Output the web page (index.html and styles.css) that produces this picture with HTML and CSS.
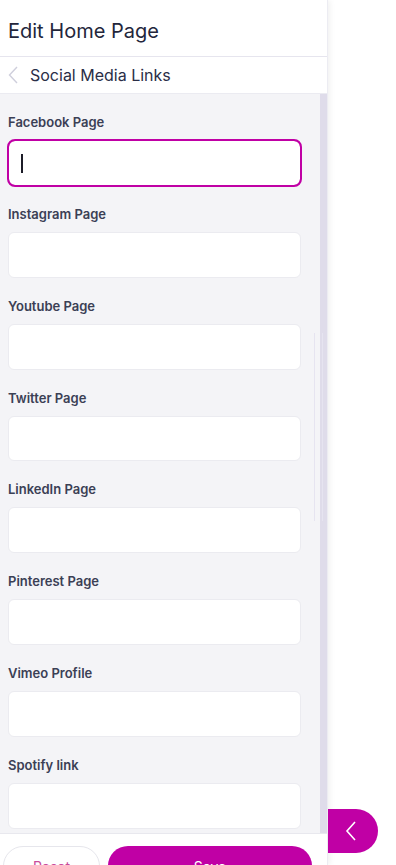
FILE: index.html
```html
<!DOCTYPE html>
<html lang="en">
<head>
    <meta charset="UTF-8">
    <meta name="viewport" content="width=device-width, initial-scale=1.0">
    <title>Edit Home Page</title>
    <link rel="stylesheet" href="styles.css">
</head>
<body>

    <!-- Editor side panel -->
    <div class="panel">
        <div class="header">
            <h1>Edit Home Page</h1>
        </div>
        <div class="subheader">
            <svg class="back" width="12" height="20" viewBox="0 0 12 20"><path d="M10 2 L2.5 10 L10 18" fill="none" stroke="#cfcfdc" stroke-width="1.4"/></svg>
            <span>Social Media Links</span>
        </div>

        <div class="content">
            <div class="form">
                <div class="field">
                    <label>Facebook Page</label>
                    <div class="input focused"><span class="caret"></span></div>
                </div>
                <div class="field">
                    <label>Instagram Page</label>
                    <div class="input"></div>
                </div>
                <div class="field">
                    <label>Youtube Page</label>
                    <div class="input"></div>
                </div>
                <div class="field">
                    <label>Twitter Page</label>
                    <div class="input"></div>
                </div>
                <div class="field">
                    <label>LinkedIn Page</label>
                    <div class="input"></div>
                </div>
                <div class="field">
                    <label>Pinterest Page</label>
                    <div class="input"></div>
                </div>
                <div class="field">
                    <label>Vimeo Profile</label>
                    <div class="input"></div>
                </div>
                <div class="field">
                    <label>Spotify link</label>
                    <div class="input"></div>
                </div>
            </div>
            <div class="track"></div>
            <div class="thumb"></div>
        </div>

        <div class="footer">
            <button class="btn reset">Reset</button>
            <button class="btn save">Save</button>
        </div>
    </div>

    <!-- Collapse toggle -->
    <button class="toggle">
        <svg width="14" height="22" viewBox="0 0 14 22"><path d="M11 2 L3 11 L11 20" fill="none" stroke="white" stroke-width="1.6"/></svg>
    </button>

</body>
</html>
```

FILE: styles.css
```css
* { margin: 0; padding: 0; box-sizing: border-box; }
body {
    background: white;
    font-family: Inter, "Noto Sans", sans-serif;
    height: 865px;
    overflow: hidden;
    position: relative;
}
.panel {
    width: 328px;
    height: 865px;
    display: flex;
    flex-direction: column;
    background: white;
    border-right: 1px solid #ececf2;
    box-shadow: 2px 0 6px rgba(0, 0, 0, 0.06);
}
.header {
    height: 57px;
    border-bottom: 1px solid #e6e5ee;
    padding: 18px 8px 0;
}
.header h1 {
    font-size: 20px;
    font-weight: 400;
    color: #23263b;
    line-height: 26px;
}
.subheader {
    height: 37px;
    border-bottom: 1px solid #ebebf1;
    display: flex;
    align-items: center;
    padding-left: 7px;
    gap: 11px;
}
.subheader span {
    font-size: 16px;
    color: #2a2e47;
    padding-bottom: 1px;
}
.content {
    flex: 1;
    display: flex;
    background: #f4f4f7;
    overflow: hidden;
    position: relative;
}
.form {
    flex: 1;
    padding: 20px 0 0 8px;
    padding-right: 19px;
}
.field {
    margin-bottom: 20px;
}
.field label {
    display: block;
    font-size: 13px;
    font-weight: 600;
    color: #3b4055;
    line-height: 16px;
    margin-bottom: 10px;
}
.input {
    height: 45.85px;
    background: white;
    border: 1px solid #ebebf0;
    border-radius: 6px;
    position: relative;
}
.input.focused {
    outline: 2px solid #c000a5;
    outline-offset: -1px;
    border-color: #c000a5;
    border-radius: 7px;
}
.caret {
    position: absolute;
    left: 12px;
    top: 13px;
    width: 1.5px;
    height: 19px;
    background: #1c1c28;
}
.track {
    width: 7px;
    background: #dfdcea;
}
.thumb {
    position: absolute;
    left: 314px;
    top: 239px;
    width: 9px;
    height: 188px;
    border-left: 1px solid #e6e4f0;
    border-right: 1px solid #e6e4f0;
}
.footer {
    height: 32px;
    border-top: 1px solid #e8e8ee;
    background: white;
    display: flex;
    gap: 8px;
    padding: 12px 0 0 3px;
}
.btn {
    height: 40px;
    border-radius: 20px;
    font-family: Inter, "Noto Sans", sans-serif;
    font-size: 14px;
    cursor: pointer;
}
.reset {
    width: 97px;
    background: white;
    border: 1px solid #e6e6ec;
    color: #c94c9c;
}
.save {
    width: 204px;
    background: #c000a5;
    border: none;
    color: white;
}
.toggle {
    position: absolute;
    left: 328px;
    top: 809px;
    width: 50px;
    height: 44px;
    border: none;
    background: #c000a5;
    border-radius: 0 22px 22px 0;
    display: flex;
    align-items: center;
    justify-content: center;
    padding-right: 4px;
}
```
